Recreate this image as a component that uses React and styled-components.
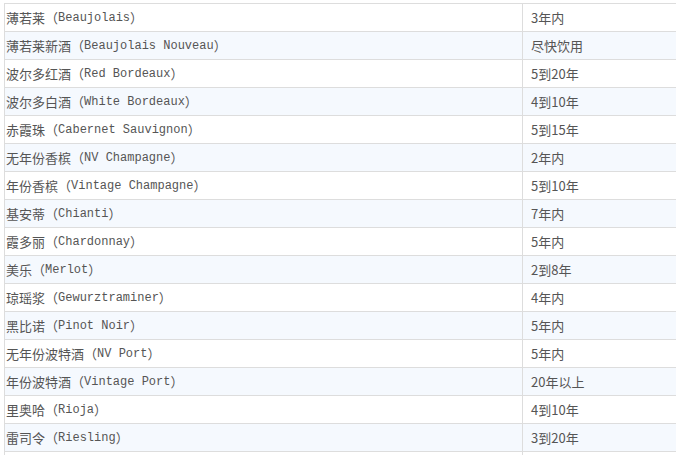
import React from "react";
import styled, { createGlobalStyle } from "styled-components";

const rows = [
  ["薄若莱", "Beaujolais", "3年内"],
  ["薄若莱新酒", "Beaujolais Nouveau", "尽快饮用"],
  ["波尔多红酒", "Red Bordeaux", "5到20年"],
  ["波尔多白酒", "White Bordeaux", "4到10年"],
  ["赤霞珠", "Cabernet Sauvignon", "5到15年"],
  ["无年份香槟", "NV Champagne", "2年内"],
  ["年份香槟", "Vintage Champagne", "5到10年"],
  ["基安蒂", "Chianti", "7年内"],
  ["霞多丽", "Chardonnay", "5年内"],
  ["美乐", "Merlot", "2到8年"],
  ["琼瑶浆", "Gewurztraminer", "4年内"],
  ["黑比诺", "Pinot Noir", "5年内"],
  ["无年份波特酒", "NV Port", "5年内"],
  ["年份波特酒", "Vintage Port", "20年以上"],
  ["里奥哈", "Rioja", "4到10年"],
  ["雷司令", "Riesling", "3到20年"],
  ["西拉", "Syrah", "5到15年"],
];

const GlobalStyle = createGlobalStyle`
  html, body {
    margin: 0;
    padding: 0;
    background: #fff;
    overflow: hidden;
  }
`;

const Table = styled.div`
  margin: 3px 0 0 4px;
  width: 700px;
  border-top: 1px solid #dddddd;
  border-left: 1px solid #dddddd;
  font-family: "Noto Sans CJK SC", sans-serif;
  font-size: 13px;
  color: #555;
`;

const Row = styled.div`
  display: grid;
  grid-template-columns: 518px 1fr;
  height: 28px;
  box-sizing: border-box;
  border-bottom: 1px solid #dddddd;
  background: ${(p) => (p.$alt ? "#f5f9fe" : "#ffffff")};
`;

const Cell = styled.div`
  display: flex;
  align-items: center;
  padding-left: ${(p) => (p.$first ? "1px" : "8px")};
  border-right: ${(p) => (p.$first ? "1px solid #dddddd" : "none")};
  white-space: nowrap;
`;

const Latin = styled.span`
  font-family: "Liberation Mono", monospace;
  font-size: 12px;
`;

const App = () => {
  return (
    <>
      <GlobalStyle />
      <Table>
        {rows.map(([zh, en, age], i) => (
          <Row key={zh} $alt={i % 2 === 1}>
            <Cell $first>
              {zh}（<Latin>{en}</Latin>）
            </Cell>
            <Cell>{age}</Cell>
          </Row>
        ))}
      </Table>
    </>
  );
};

export default App;
